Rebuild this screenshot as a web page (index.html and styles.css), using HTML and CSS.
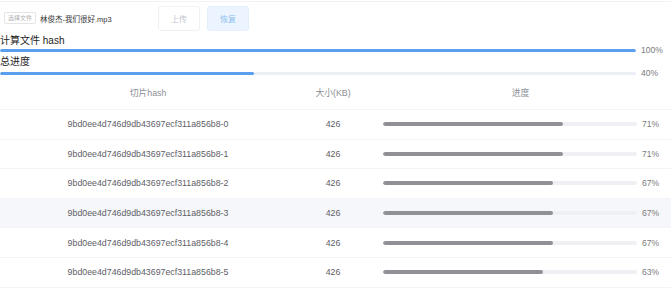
FILE: index.html
```html
<!DOCTYPE html>
<html>
<head>
    <title>大文件上传</title>
    <link rel="stylesheet" href="styles.css">
</head>
<body>
    <div class="toolbar">
        <div class="file-input">
            <span class="file-btn">选择文件</span>
            <span class="file-name">林俊杰-我们很好.mp3</span>
        </div>
        <button type="button" class="btn btn-upload" disabled>上传</button>
        <button type="button" class="btn btn-resume">恢复</button>
    </div>

    <div class="section first">
        <div class="section-title">计算文件 hash</div>
        <div class="progress">
            <div class="track"><div class="fill blue" style="width: 100%"></div></div>
            <span class="pct">100%</span>
        </div>
    </div>
    <div class="section">
        <div class="section-title">总进度</div>
        <div class="progress">
            <div class="track"><div class="fill blue" style="width: 40%"></div></div>
            <span class="pct">40%</span>
        </div>
    </div>

    <table class="chunks">
        <colgroup>
            <col class="c-hash">
            <col class="c-size">
            <col class="c-prog">
        </colgroup>
        <thead>
            <tr><th>切片hash</th><th>大小(KB)</th><th>进度</th></tr>
        </thead>
        <tbody id="chunkBody"></tbody>
    </table>

    <script>
        const chunks = [71, 71, 67, 67, 67, 63];
        const body = document.getElementById('chunkBody');

        chunks.forEach((pct, i) => {
            const tr = document.createElement('tr');
            if (i === 3) tr.className = 'hover';
            tr.innerHTML =
                `<td>9bd0ee4d746d9db43697ecf311a856b8-${i}</td>` +
                `<td>426</td>` +
                `<td><div class="progress small">` +
                `<div class="track"><div class="fill gray" style="width: ${pct}%"></div></div>` +
                `<span class="pct">${pct}%</span></div></td>`;
            body.appendChild(tr);
        });
    </script>
</body>
</html>
```

FILE: styles.css
```css
body {
    margin: 0;
    font-family: "Liberation Sans", "Noto Sans CJK SC", sans-serif;
    color: #303133;
    background: #fff;
}
.toolbar {
    display: flex;
    align-items: center;
    height: 32px;
    margin-top: 1px;
    border-top: 1px solid #f2f2f2;
    padding-left: 4px;
}
.file-input {
    display: flex;
    align-items: center;
    gap: 4px;
    width: 154px;
}
.file-btn {
    font-size: 6px;
    color: #b0b0b0;
    border: 1px solid #e4e4e4;
    border-radius: 2px;
    padding: 1px 3px;
    line-height: 8px;
}
.file-name {
    font-size: 7.5px;
    color: #333;
}
.btn {
    height: 25px;
    width: 42px;
    border-radius: 3px;
    font-family: inherit;
    font-size: 8px;
    padding: 0;
    margin-right: 7px;
    cursor: pointer;
}
.btn-upload {
    background: #fff;
    border: 1px solid #f0f1f4;
    color: #c0c4cc;
}
.btn-resume {
    background: #ecf5ff;
    border: 1px solid #e3effc;
    color: #8fbff0;
}
.section {
    padding-top: 3px;
}
.section.first {
    padding-top: 2px;
}
.section-title {
    font-size: 10px;
    line-height: 10px;
    color: #222;
}
.progress {
    display: flex;
    align-items: center;
    height: 12px;
}
.section.first .progress {
    height: 8px;
}
.track {
    width: 636px;
    height: 3px;
    background: #ebeef5;
    border-radius: 2px;
    overflow: hidden;
}
.fill {
    height: 100%;
    border-radius: 2px;
}
.fill.blue {
    background: #5a9ef0;
}
.fill.gray {
    background: #8f9196;
}
.pct {
    margin-left: 5px;
    font-size: 8.5px;
    color: #7a7a7a;
}
.chunks {
    width: 671px;
    border-collapse: collapse;
    table-layout: fixed;
}
.c-hash { width: 296px; }
.c-size { width: 74px; }
.chunks th,
.chunks td {
    height: 28.6px;
    padding: 0;
    text-align: center;
    font-size: 8.8px;
    border-bottom: 1px solid #f3f4f7;
}
.chunks th {
    height: 27px;
    padding-bottom: 3px;
    font-weight: normal;
    color: #8c8f96;
}
.chunks td {
    color: #5e6066;
}
.chunks tr.hover td {
    background: #f6f7fa;
}
.progress.small {
    padding-left: 13px;
}
.progress.small .track {
    width: 254px;
    height: 4px;
    background: #eef0f4;
}
```
